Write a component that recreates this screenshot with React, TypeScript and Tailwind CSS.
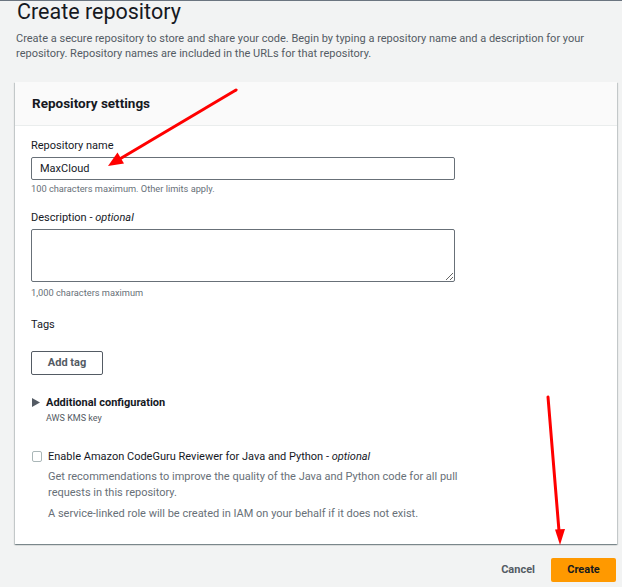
import React from 'react';

const font = { fontFamily: 'Roboto, "Liberation Sans", Arial, sans-serif' };

const Arrows = () => (
	<svg
		className="absolute inset-0 pointer-events-none"
		width={622}
		height={587}
		viewBox="0 0 622 587"
	>
		<line x1={236} y1={89} x2={118} y2={159} stroke="#ff0000" strokeWidth={3} strokeLinecap="round" />
		<polygon points="108,165 124,162.5 117.5,151.5" fill="#ff0000" />
		<line x1={548} y1={396} x2={559} y2={530} stroke="#ff0000" strokeWidth={3} strokeLinecap="round" />
		<polygon points="560,544 565,528 555,528.5" fill="#ff0000" />
	</svg>
);

const App = () => {
	return (
		<div
			className="relative w-[622px] h-[587px] overflow-hidden bg-[#f2f3f3] border-t border-[#6b7580] text-[#16191f]"
			style={font}
		>
			<div className="pl-4 pr-[26px]">
				<h1 className="mt-px text-[21.5px] leading-[20px] pl-px">Create repository</h1>
				<p className="mt-[9px] text-[11px] leading-[15px] text-[#545b64]">
					Create a secure repository to store and share your code. Begin by typing a repository name and a description for your repository. Repository names are included in the URLs for that repository.
				</p>
			</div>

			<div className="ml-[15px] mr-[5px] mt-[21px] bg-white shadow-[0_1px_1px_0_rgba(0,28,36,0.3),1px_1px_1px_0_rgba(0,28,36,0.15),-1px_1px_1px_0_rgba(0,28,36,0.15)]">
				<div className="h-[44px] flex items-center pl-[17px] bg-[#fafafa] border-b border-[#eaeded]">
					<h2 className="text-[13.5px] font-bold">Repository settings</h2>
				</div>
				<div className="pl-4 pr-4 pt-[12px] pb-[22px]">
					<label className="block text-[11px] leading-[15px]">Repository name</label>
					<input
						readOnly
						value="MaxCloud"
						className="mt-[4px] block w-[424px] h-[23px] px-2 text-[11px] text-[#16191f] border border-[#687078] rounded-[2px] outline-none"
						style={font}
					/>
					<p className="mt-[3px] text-[9.25px] leading-[12px] text-[#687078]">
						100 characters maximum. Other limits apply.
					</p>

					<label className="block mt-[15px] text-[11px] leading-[15px]">
						Description - <i>optional</i>
					</label>
					<textarea
						readOnly
						className="mt-[4px] block w-[424px] h-[53px] px-2 text-[11px] border border-[#687078] rounded-[2px] outline-none"
					/>
					<p className="mt-[5px] text-[9.25px] leading-[12px] text-[#687078]">
						1,000 characters maximum
					</p>

					<p className="mt-[18px] text-[11px] leading-[15px]">Tags</p>
					<button className="mt-[19px] block w-[72px] h-[24px] border border-[#545b64] rounded-[2px] text-[11px] font-bold text-[#545b64] bg-white">
						Add tag
					</button>

					<div className="mt-[20px] flex items-center gap-[6px]">
						<svg width={8} height={9} viewBox="0 0 8 9" className="ml-px">
							<polygon points="0,0 8,4.5 0,9" fill="#545b64" />
						</svg>
						<span className="text-[11px] leading-[15px] font-bold">Additional configuration</span>
					</div>
					<p className="mt-[2px] pl-[15px] text-[9px] leading-[12px] text-[#545b64]">AWS KMS key</p>

					<div className="mt-[25px] flex items-center gap-[6px]">
						<span className="ml-px w-[10px] h-[11px] border border-[#aab7b8] rounded-[2px] bg-white" />
						<span className="text-[11px] leading-[15px]">
							Enable Amazon CodeGuru Reviewer for Java and Python - <i>optional</i>
						</span>
					</div>
					<div className="pl-[17px] w-[440px] text-[11px] leading-[16px] text-[#687078]">
						<p className="mt-[5px]">
							Get recommendations to improve the quality of the Java and Python code for all pull requests in this repository.
						</p>
						<p className="mt-[5px]">
							A service-linked role will be created in IAM on your behalf if it does not exist.
						</p>
					</div>
				</div>
			</div>

			<div className="mt-[14px] mr-[6px] flex justify-end items-center">
				<button className="h-[24px] px-4 text-[11px] font-bold text-[#545b64]">Cancel</button>
				<button className="h-[24px] w-[65px] rounded-[2px] bg-[#ff9900] text-[11px] font-bold text-[#16191f]">
					Create
				</button>
			</div>

			<Arrows />
		</div>
	);
};

export default App;
